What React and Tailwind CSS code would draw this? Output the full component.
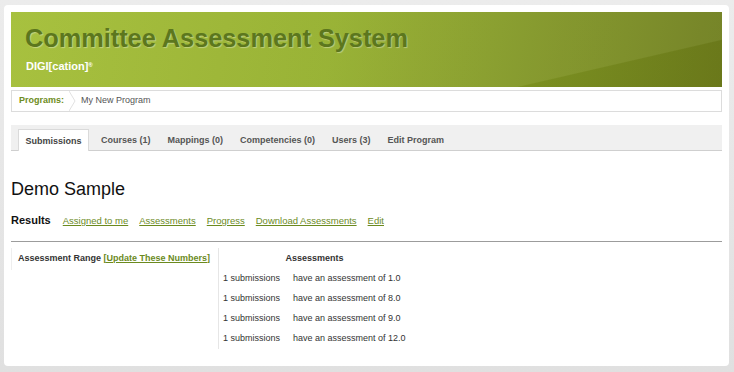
export default function App() {
  const rows = ["1.0", "8.0", "9.0", "12.0"];
  const tabs = ["Courses (1)", "Mappings (0)", "Competencies (0)", "Users (3)", "Edit Program"];
  const links = ["Assigned to me", "Assessments", "Progress", "Download Assessments", "Edit"];

  return (
    <div className="h-[372px] w-full bg-[linear-gradient(#ececec,#e0e0e0)] pt-[5px] pl-[4px] pr-[5px] font-['Liberation_Sans',Arial,sans-serif]">
      <div className="h-[361px] rounded-[4px] bg-white px-[7px] pt-[7px]">
        {/* header */}
        <div className="h-[75px] bg-[linear-gradient(167deg,rgba(255,255,255,0.06)_0%,rgba(255,255,255,0.06)_80%,rgba(0,0,0,0.03)_80.5%),linear-gradient(100deg,#a2bd33_0%,#93ae2a_45%,#6d7c1b_100%)] pl-[14px] pt-[11px]">
          <div className="text-[25.3px] font-bold leading-[30px] text-[#5c771d] [text-shadow:1px_1px_1px_rgba(255,255,255,0.35)]">
            Committee Assessment System
          </div>
          <div className="mt-[6px] pl-[1px] text-[11px] font-bold leading-[14px] text-white">
            DIGI[cation]<sup className="text-[6px]">®</sup>
          </div>
        </div>

        {/* breadcrumb */}
        <div className="mt-[3px] flex h-[22px] items-center border border-[#dcdcdc] text-[9px]">
          <span className="pl-[7px] font-bold text-[#6d8c22]">Programs:</span>
          <svg width="8" height="20" viewBox="0 0 8 20" className="ml-[5px]">
            <polyline points="0,0 6,10 0,20" fill="none" stroke="#e2e2e2" strokeWidth="1" />
          </svg>
          <span className="ml-[4px] text-[#555]">My New Program</span>
        </div>

        {/* tabs */}
        <div className="mt-[13px] flex h-[26px] items-end border-b border-[#cfcfcf] bg-[#f0f0f0] pl-[7px] text-[9px] font-bold text-[#555]">
          <div className="-mb-px flex h-[22px] w-[71px] items-center justify-center border border-b-0 border-[#dadada] bg-white pt-[3px] text-[#444]">
            Submissions
          </div>
          <div className="flex h-[22px] items-center gap-[17px] pl-[12px] pt-[3px]">
            {tabs.map((t) => (
              <span key={t}>{t}</span>
            ))}
          </div>
        </div>

        {/* title */}
        <div className="mt-[27px] text-[18px] leading-[22px] text-[#111]">Demo Sample</div>

        <div className="mt-[12px] flex items-baseline">
          <span className="mr-[12px] text-[11px] font-bold text-[#111]">Results</span>
          <div className="flex gap-[11px] text-[9.5px]">
            {links.map((l) => (
              <span key={l} className="text-[#6b8a1e] underline">
                {l}
              </span>
            ))}
          </div>
        </div>

        <div className="mt-[12px] h-px bg-[#9c9c9c]" />

        {/* table */}
        <div className="mt-[6px] flex text-[9px] text-[#333]">
          <div className="w-[207px]">
            <div className="border-l border-[#eee] pl-[6px] pt-[4px] pb-[5px] font-bold leading-[13px]">
              Assessment Range{" "}
              <span className="text-[#6b8a1e] underline">[Update These Numbers]</span>
            </div>
          </div>
          <div className="border-l border-[#e6e6e6] pl-[4px] pb-[4px]">
            <div className="w-[183px] pt-[4px] text-center font-bold leading-[13px]">Assessments</div>
            {rows.map((r) => (
              <div key={r} className="mt-[7px] flex leading-[13px]">
                <span className="w-[70px]">1 submissions</span>
                <span>have an assessment of {r}</span>
              </div>
            ))}
          </div>
        </div>
      </div>
    </div>
  );
}
